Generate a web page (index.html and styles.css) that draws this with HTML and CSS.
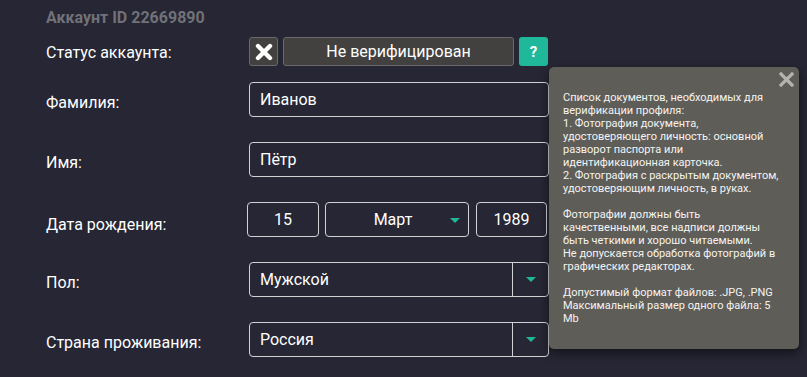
FILE: index.html
```html
<!DOCTYPE html>
<html lang="ru">
<head>
<meta charset="utf-8">
<link rel="stylesheet" href="styles.css">
</head>
<body>
<div class="page">
  <div class="account-id">Аккаунт ID 22669890</div>
  <div class="form">
    <div class="row status-row">
      <div class="label">Статус аккаунта:</div>
      <div class="control status">
        <span class="btn-x"><svg width="18" height="18" viewBox="0 0 18 18"><path d="M3 3 L15 15 M15 3 L3 15" stroke="#fff" stroke-width="4.4" stroke-linecap="round"/></svg></span>
        <span class="btn-status">Не верифицирован</span>
        <span class="btn-help">?</span>
      </div>
    </div>
    <div class="row">
      <div class="label">Фамилия:</div>
      <div class="control"><div class="input">Иванов</div></div>
    </div>
    <div class="row">
      <div class="label">Имя:</div>
      <div class="control"><div class="input">Пётр</div></div>
    </div>
    <div class="row">
      <div class="label label-date">Дата рождения:</div>
      <div class="control date">
        <div class="box day">15</div>
        <div class="box month">Март<span class="arrow month-arrow"></span></div>
        <div class="box year">1989</div>
      </div>
    </div>
    <div class="row">
      <div class="label">Пол:</div>
      <div class="control"><div class="select"><span class="select-value">Мужской</span><span class="select-btn"><span class="arrow"></span></span></div></div>
    </div>
    <div class="row">
      <div class="label">Страна проживания:</div>
      <div class="control"><div class="select"><span class="select-value">Россия</span><span class="select-btn"><span class="arrow"></span></span></div></div>
    </div>
  </div>
  <div class="tooltip">
    <span class="tooltip-close"><svg width="15" height="15" viewBox="0 0 15 15"><path d="M2 2 L13 13 M13 2 L2 13" stroke="#b4b3b0" stroke-width="3.2" stroke-linecap="square"/></svg></span>
    <div class="tooltip-text">Список документов, необходимых для<br>верификации профиля:<br>1. Фотография документа,<br>удостоверяющего личность: основной<br>разворот паспорта или<br>идентификационная карточка.<br>2. Фотография с раскрытым документом,<br>удостоверяющим личность, в руках.<br><br>Фотографии должны быть<br>качественными, все надписи должны<br>быть четкими и хорошо читаемыми.<br>Не допускается обработка фотографий в<br>графических редакторах.<br><br>Допустимый формат файлов: .JPG, .PNG<br>Максимальный размер одного файла: 5<br>Mb</div>
  </div>
</div>
</body>
</html>
```

FILE: styles.css
```css
html, body {
  margin: 0;
  padding: 0;
  background: #262634;
  font-family: Roboto, "Liberation Sans", sans-serif;
  color: #fff;
}
.page {
  position: relative;
  width: 807px;
  height: 377px;
  overflow: hidden;
  padding-left: 46px;
  box-sizing: border-box;
}
.account-id {
  padding-top: 8px;
  font-size: 16px;
  line-height: 19px;
  font-weight: 700;
  color: #717178;
}
.form {
  margin-top: 10px;
  display: flex;
  flex-direction: column;
  gap: 25px;
}
.row {
  display: flex;
  align-items: center;
  height: 35px;
}
.status-row {
  height: 29px;
  margin-bottom: -9px;
}
.label {
  width: 203px;
  flex: none;
  font-size: 16px;
  line-height: 19px;
  padding-top: 6px;
  box-sizing: border-box;
}
.status-row .label { padding-top: 1px; }
.label-date { padding-top: 9px; }
.control {
  width: 300px;
  display: flex;
}
.status { gap: 5px; height: 29px; }
.btn-x, .btn-status {
  box-sizing: border-box;
  height: 29px;
  background: #42413f;
  border: 1px solid #6a6a6c;
  border-radius: 3px;
  display: flex;
  align-items: center;
  justify-content: center;
}
.btn-x { width: 29px; flex: none; }
.btn-status {
  width: 231px;
  font-size: 16px;
}
.btn-help {
  width: 29px;
  height: 29px;
  flex: none;
  background: #20b89a;
  border-radius: 3px;
  display: flex;
  align-items: center;
  justify-content: center;
  font-weight: 700;
  font-size: 15px;
}
.input, .select, .box {
  box-sizing: border-box;
  height: 35px;
  border: 1px solid #d2d2d6;
  border-radius: 4px;
  font-size: 16px;
  display: flex;
  align-items: center;
}
.input { width: 300px; padding-left: 10px; }
.date { margin-left: -2px; }
.box { justify-content: center; position: relative; }
.day { width: 72px; }
.month { width: 144px; margin-left: 6px; padding-right: 8px; }
.year { width: 71px; margin-left: 7px; }
.arrow {
  width: 0;
  height: 0;
  border-left: 5px solid transparent;
  border-right: 5px solid transparent;
  border-top: 5px solid #1fb596;
}
.month-arrow {
  position: absolute;
  right: 8px;
  top: 15px;
}
.select { width: 300px; }
.select-value { flex: 1; padding-left: 10px; }
.select-btn {
  width: 35px;
  height: 100%;
  border-left: 1px solid #d2d2d6;
  display: flex;
  align-items: center;
  justify-content: center;
}
.tooltip {
  position: absolute;
  left: 549px;
  top: 67px;
  width: 250px;
  height: 282px;
  box-sizing: border-box;
  background: #5f5d58;
  border-radius: 5px;
  box-shadow: 0 4px 10px rgba(0, 0, 0, 0.5);
  padding: 24px 0 0 14px;
}
.tooltip-close {
  position: absolute;
  right: 5px;
  top: 5px;
  display: block;
  width: 15px;
  height: 15px;
}
.tooltip-text {
  font-size: 11px;
  line-height: 13px;
  color: #f4f4f2;
  white-space: nowrap;
}
```
